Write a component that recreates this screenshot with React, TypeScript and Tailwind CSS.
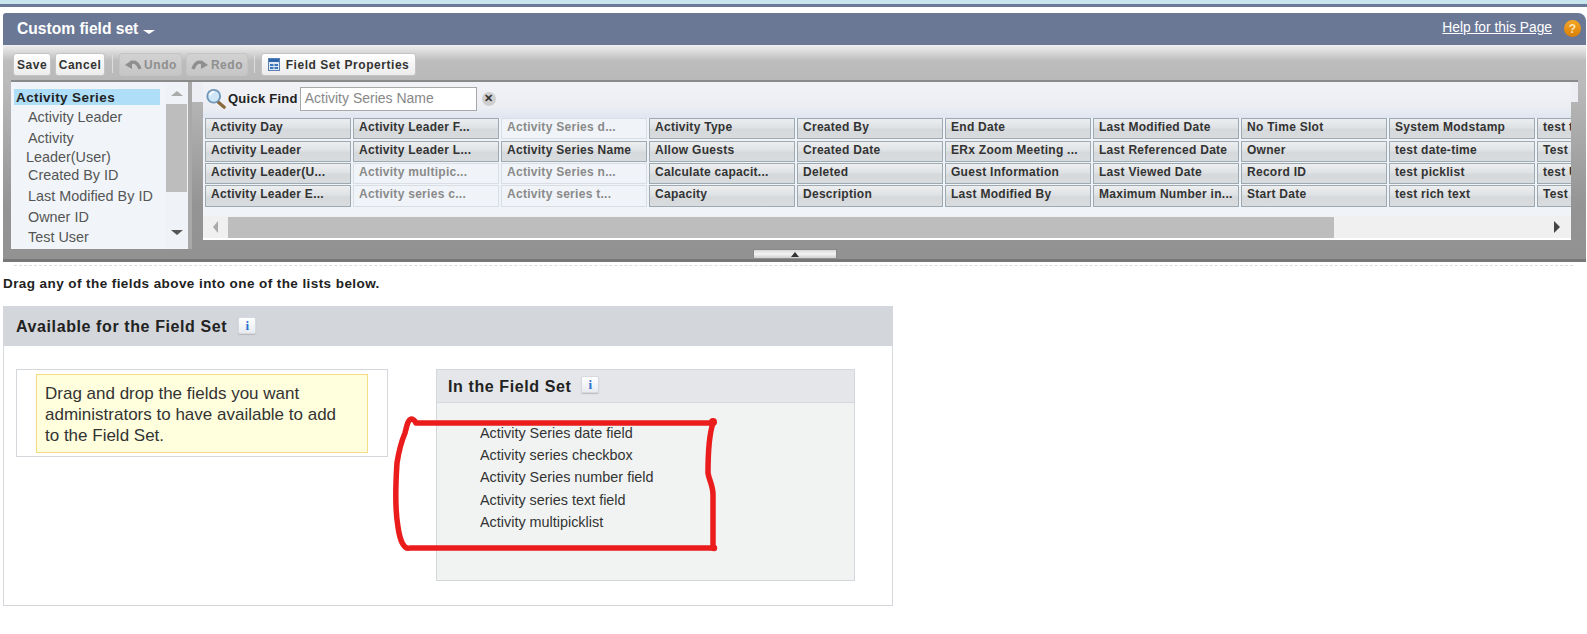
import React from "react";

const cols: [string, boolean][][] = [
  [["Activity Day", false], ["Activity Leader", false], ["Activity Leader(U...", false], ["Activity Leader E...", false]],
  [["Activity Leader F...", false], ["Activity Leader L...", false], ["Activity multipic...", true], ["Activity series c...", true]],
  [["Activity Series d...", true], ["Activity Series Name", false], ["Activity Series n...", true], ["Activity series t...", true]],
  [["Activity Type", false], ["Allow Guests", false], ["Calculate capacit...", false], ["Capacity", false]],
  [["Created By", false], ["Created Date", false], ["Deleted", false], ["Description", false]],
  [["End Date", false], ["ERx Zoom Meeting ...", false], ["Guest Information", false], ["Last Modified By", false]],
  [["Last Modified Date", false], ["Last Referenced Date", false], ["Last Viewed Date", false], ["Maximum Number in...", false]],
  [["No Time Slot", false], ["Owner", false], ["Record ID", false], ["Start Date", false]],
  [["System Modstamp", false], ["test date-time", false], ["test picklist", false], ["test rich text", false]],
  [["test text", false], ["Test User", false], ["test URL", false], ["Test Text", false]],
];

function Info() {
  return (
    <span className="inline-flex h-[17px] w-[18px] items-center justify-center rounded-[2px] border border-[#d5d9e0] bg-gradient-to-b from-white to-[#e8ebf0] font-['Liberation_Serif'] text-[13px] leading-none font-bold text-[#2a6fd0] shadow-[0_1px_1px_#bbb]">
      i
    </span>
  );
}

function Btn({ children, off, className }: { children: React.ReactNode; off?: boolean; className: string }) {
  return (
    <div className={`flex h-[23px] items-center justify-center rounded-[3px] border border-[#c4c4c4] bg-gradient-to-b text-[12px] font-bold tracking-[0.55px] ${off ? "from-[#d2d2d2] to-[#c6c6c6] text-[#8f8f8f]" : "from-white to-[#ececec] text-[#333]"} ${className}`}>
      {children}
    </div>
  );
}

export default function App() {
  return (
    <div className="h-[634px] w-[1587px] overflow-hidden bg-white font-['Liberation_Sans',Arial,sans-serif] text-[#333]">
      <div className="h-[4px] bg-[#c9e6ee]" />
      <div className="h-[3px] bg-[#6b7a99]" />
      <div className="ml-[3px] mt-[6px] h-[249px] w-[1583px] overflow-hidden rounded-tl-[3px] rounded-tr-[8px] border-b-[3px] border-[#777]">
        {/* title */}
        <div className="flex h-[32px] items-center justify-between bg-[#6a7896] pl-[14px] pr-[5px] text-white">
          <div className="flex items-center text-[15.6px] font-bold">
            Custom field set
            <span className="ml-[5px] mt-[6px] h-0 w-0 border-x-[6px] border-t-[4px] border-x-transparent border-t-white" />
          </div>
          <div className="-mt-[1px] flex items-center gap-[12px]">
            <span className="text-[13.8px] underline">Help for this Page</span>
            <span className="flex h-[17px] w-[17px] items-center justify-center rounded-full bg-gradient-to-b from-[#f5a623] to-[#d97f06] text-[12px] font-bold text-[#fbe7b8]">?</span>
          </div>
        </div>
        {/* toolbar */}
        <div className="flex h-[35px] items-start gap-[4px] bg-[linear-gradient(#f0f0f0,#bdbdbd_45%,#b9b9b9)] pl-[10px] pt-[8px]">
          <Btn className="w-[38px]">Save</Btn>
          <Btn className="w-[50px]">Cancel</Btn>
          <div className="ml-[3px] mr-[2px] mt-[2px] h-[18px] w-[1px] bg-[#ddd]" />
          <Btn off className="w-[63px]">
            <span className="flex items-center gap-[2px]">
              <svg width="18" height="14" viewBox="0 0 18 14" fill="none">
                <path d="M6 6 C9 3 13 3 16 11" stroke="#8f8f8f" strokeWidth="3.4" />
                <path d="M1 7 L8 2 V11 Z" fill="#8f8f8f" />
              </svg>
              Undo
            </span>
          </Btn>
          <Btn off className="w-[62px]">
            <span className="flex items-center gap-[2px]">
              <svg width="18" height="14" viewBox="0 0 18 14" fill="none">
                <path d="M12 6 C9 3 5 3 2 11" stroke="#8f8f8f" strokeWidth="3.4" />
                <path d="M17 7 L10 2 V11 Z" fill="#8f8f8f" />
              </svg>
              Redo
            </span>
          </Btn>
          <div className="mx-[2px] mt-[2px] h-[18px] w-[1px] bg-[#ddd]" />
          <Btn className="w-[155px]">
            <span className="flex items-center gap-[6px]">
              <svg width="12" height="13" viewBox="0 0 12 13">
                <rect x="0.5" y="0.5" width="11" height="12" fill="#dfe8f3" stroke="#5b7fae" />
                <rect x="1" y="1" width="10" height="3" fill="#2d66ad" />
                <path d="M2 6h3.5v2H2zM6.5 6H10v2H6.5zM2 9h3.5v2H2zM6.5 9H10v2H6.5z" fill="#3a76bd" />
              </svg>
              Field Set Properties
            </span>
          </Btn>
        </div>
        {/* palette */}
        <div className="h-[179px] bg-[linear-gradient(#bbb,#949494_70%,#929292)] pl-[8px]">
          <div className="h-[2px] w-[1567px] bg-[#8a8a8a]" />
          <div className="flex items-start">
            {/* object tree */}
            <div className="flex h-[167px] w-[181px] border-r-[4px] border-[#a9a9a9]">
              <div className="h-full w-[154px] bg-[#f1f5f9] pl-[3px] pt-[7px] text-[14.4px] leading-[20px] text-[#555]">
                <div className="h-[16px] w-[146px] bg-[#afdef9] pl-[2px] text-[13.5px] leading-[18px] font-bold tracking-[0.4px] text-[#222]">Activity Series</div>
                <div className="pl-[14px] pt-[2px]">
                  <div className="h-[20px]">Activity Leader</div>
                  <div className="h-[17px] pt-[1px]">Activity</div>
                  <div className="-ml-[2px] h-[20px] pt-[4px] leading-[18px]">Leader(User)</div>
                  <div className="h-[21px] pt-[1px]">Created By ID</div>
                  <div className="h-[21px] pt-[1px]">Last Modified By ID</div>
                  <div className="h-[20px] pt-[1px]">Owner ID</div>
                  <div className="h-[20px] pt-[1px]">Test User</div>
                </div>
              </div>
              <div className="flex w-[23px] flex-col items-center bg-[#eff2f6]">
                <div className="flex h-[22px] w-full items-center justify-center">
                  <span className="h-0 w-0 border-x-[6px] border-b-[5px] border-x-transparent border-b-[#aaa]" />
                </div>
                <div className="h-[88px] w-[21px] bg-[#bdbdbd]" />
                <div className="flex w-full flex-1 items-end justify-center pb-[14px]">
                  <span className="h-0 w-0 border-x-[6px] border-t-[5px] border-x-transparent border-t-[#555]" />
                </div>
              </div>
            </div>
            <div className="h-[20px] w-[11px] bg-[#eceef3]" />
            {/* right */}
            <div className="w-[1368px]">
              <div className="flex h-[36px] items-center bg-[linear-gradient(#f0f2f6,#eceef3_70%,#dfe6f0)] pb-[3px] pl-[2px]">
                <svg width="22" height="22" viewBox="0 0 24 24">
                  <path d="M14 15 L21 21" stroke="#8a6a3c" strokeWidth="3.5" strokeLinecap="round" />
                  <circle cx="9.5" cy="9" r="7" fill="#cfe6f7" stroke="#6f96b8" strokeWidth="2" />
                  <path d="M5.5 8 A5 5 0 0 1 10 4" stroke="#fff" strokeWidth="2" fill="none" />
                </svg>
                <span className="ml-[1px] text-[13px] font-bold tracking-[0.25px] text-[#222]">Quick Find</span>
                <div className="ml-[2px] flex h-[24px] w-[177px] items-center border border-[#a8a8a8] bg-white pl-[4px] text-[14px] text-[#888]">Activity Series Name</div>
                <span className="ml-[5px] flex h-[14px] w-[14px] items-center justify-center rounded-full bg-[#cfcfcf] text-[11px] leading-none font-bold text-[#333]">✕</span>
              </div>
              <div className="flex h-[98px] gap-[2px] overflow-hidden bg-[#f0f4f8] pl-[2px]">
                {cols.map((col, i) => (
                  <div key={i} className="flex w-[146px] shrink-0 flex-col gap-[1px]">
                    {col.map(([t, off], j) => (
                      <div
                        key={j}
                        className={`border pl-[5px] text-[12px] leading-[17px] font-bold tracking-[0.28px] whitespace-nowrap ${j === 0 ? "mb-[1px]" : ""} ${j === 3 ? "h-[22px]" : "h-[21px]"} ${
                          off
                            ? "border-[#d8dee3] bg-[#f0f4f8] text-[#8a8a8a]"
                            : "border-[#9eaab2] bg-[linear-gradient(#eceef0,#dfe2e4_45%,#d5d9dc_55%,#d8dcdf)] text-[#333]"
                        }`}
                      >
                        {t}
                      </div>
                    ))}
                  </div>
                ))}
              </div>
              <div className="flex h-[22px] items-center bg-[#f0f0f0]">
                <div className="flex w-[25px] justify-center">
                  <span className="h-0 w-0 border-y-[6px] border-r-[5px] border-y-transparent border-r-[#aaa]" />
                </div>
                <div className="h-[21px] w-[1106px] bg-[#bdbdbd]" />
                <div className="flex flex-1 justify-end pr-[11px]">
                  <span className="h-0 w-0 border-y-[6px] border-l-[6px] border-y-transparent border-l-[#444]" />
                </div>
              </div>
              <div className="h-[2px] bg-white" />
              <div className="ml-[550px] mt-[9px] h-[9px] w-[84px]">
                <div className="flex h-[9px] w-[84px] items-center justify-center border-x border-t border-[#888] bg-[linear-gradient(#d8d8d8,#f4f4f4_50%,#cfcfcf)]">
                  <span className="h-0 w-0 border-x-[4px] border-b-[5px] border-x-transparent border-b-[#333]" />
                </div>
              </div>
            </div>
            <div className="h-[20px] w-[7px] bg-[#eceef3]" />
          </div>
        </div>
      </div>
      <div className="mx-[14px] mt-[3px] h-0 border-t border-dashed border-[#ddd]" />
      <div className="ml-[3px] mt-[10px] text-[13.5px] leading-[16px] font-bold tracking-[0.42px] text-[#222]">Drag any of the fields above into one of the lists below.</div>
      {/* Available */}
      <div className="relative ml-[3px] mt-[14px] h-[300px] w-[890px] border border-[#d4d7dc]">
        <div className="flex h-[39px] items-center bg-[#d3d6db] pl-[12px]">
          <span className="text-[16px] font-bold tracking-[0.6px] text-[#222]">Available for the Field Set</span>
          <span className="-mt-[3px] ml-[11px] flex"><Info /></span>
        </div>
        <div className="flex items-start pl-[12px] pt-[23px]">
          <div className="h-[88px] w-[372px] border border-[#d4d7dc] pl-[19px] pt-[4px]">
            <div className="h-[79px] w-[332px] border border-[#f5dc85] bg-[#ffffdd] pl-[8px] pr-[14px] pt-[8px] text-[17px] leading-[21px] text-[#333]">
              Drag and drop the fields you want administrators to have available to add to the Field Set.
            </div>
          </div>
          <div className="ml-[48px] h-[212px] w-[419px] border border-[#d4d7dc] bg-[#f1f3f3]">
            <div className="flex h-[33px] items-center border-b border-[#d4d7dc] bg-[#e4e6e9] pb-[-1px] pl-[11px] pt-[2px]">
              <span className="text-[16px] font-bold tracking-[0.6px] text-[#222]">In the Field Set</span>
              <span className="-mt-[5px] ml-[10px] flex"><Info /></span>
            </div>
            <div className="pl-[43px] pt-[20px] text-[14.4px] text-[#333]">
              <div className="h-[22px] leading-[20px]">Activity Series date field</div>
              <div className="h-[22px] leading-[20px]">Activity series checkbox</div>
              <div className="h-[23px] leading-[20px]">Activity Series number field</div>
              <div className="h-[22px] leading-[20px]">Activity series text field</div>
              <div className="h-[22px] leading-[20px]">Activity multipicklist</div>
            </div>
          </div>
        </div>
        <svg className="absolute left-[376px] top-[93px]" width="345" height="160" viewBox="0 0 345 160" fill="none">
          <path
            d="M36 23 H333 C329 35 328 55 328 73 C329 80 333 85 333 95 V148 H30 C24 150 20 141 18 127 C15 110 15 93 17 63 C19 50 22 40 25 33 C27 25 28 20 31 19 C33 19 35 21 36 23"
            stroke="#ea1c1c"
            strokeWidth="5.5"
            strokeLinecap="round"
            strokeLinejoin="round"
          />
          <circle cx="333" cy="22" r="4" fill="#ea1c1c" />
          <circle cx="334" cy="148" r="3.2" fill="#ea1c1c" />
        </svg>
      </div>
    </div>
  );
}
